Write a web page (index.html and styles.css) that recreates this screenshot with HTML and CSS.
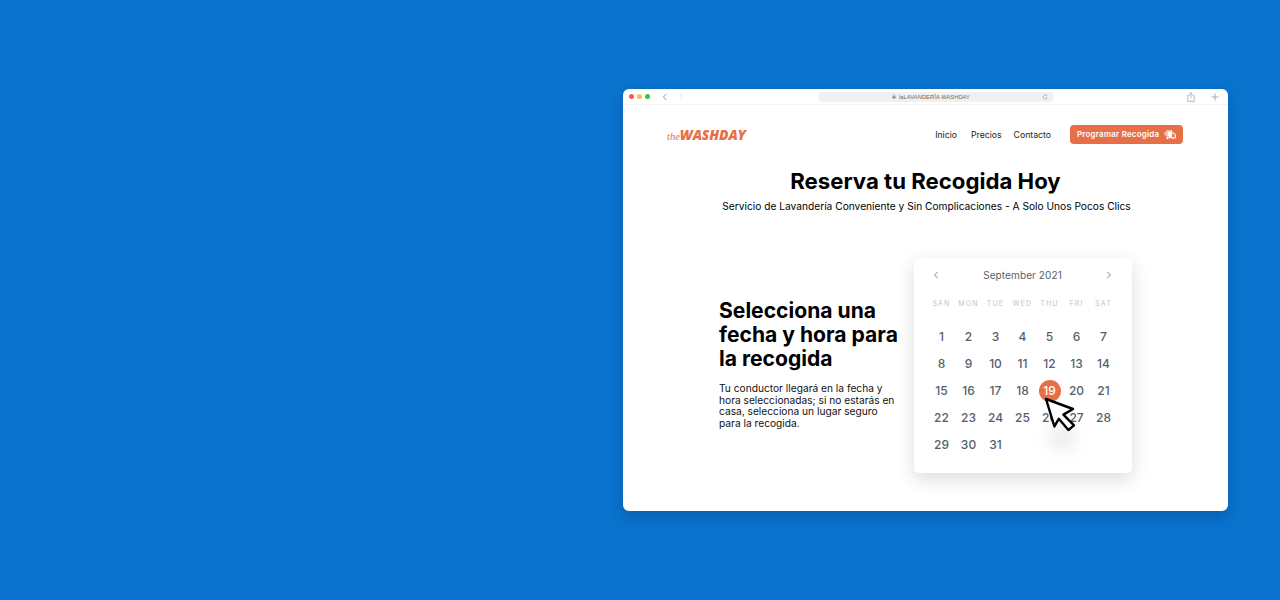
FILE: index.html
```html
<!DOCTYPE html>
<html lang="es">
<head>
<meta charset="utf-8">
<title>Washday</title>
<link rel="stylesheet" href="styles.css">
</head>
<body>
<main class="window">
  <div class="chrome">
    <div class="lights"><i class="light red"></i><i class="light yellow"></i><i class="light green"></i></div>
    <div class="navarrows">
      <svg width="6" height="8" viewBox="0 0 6 8"><path d="M4.5 .8 1.4 4l3.1 3.2" fill="none" stroke="#8a8a8a" stroke-width=".9"/></svg>
      <svg width="6" height="8" viewBox="0 0 6 8"><path d="M1.5 .8 4.6 4 1.5 7.2" fill="none" stroke="#dcdcdc" stroke-width=".9"/></svg>
    </div>
    <div class="urlbar">
      <svg class="lock" width="4" height="5" viewBox="0 0 5 6"><path d="M.5 2.6h4V5.6h-4z" fill="#8a8a8a"/><path d="M1.3 2.6V1.7a1.2 1.2 0 0 1 2.4 0v.9" fill="none" stroke="#8a8a8a" stroke-width=".6"/></svg>
      <span class="urltext">laLAVANDERÍA WASHDAY</span>
      <svg class="reload" width="6" height="6" viewBox="0 0 6 6"><path d="M5 3a2 2 0 1 1-.7-1.5" fill="none" stroke="#9a9a9a" stroke-width=".6"/><path d="M4.6.7v1.2H3.4" fill="none" stroke="#9a9a9a" stroke-width=".5"/></svg>
    </div>
    <div class="chrome-actions">
      <svg width="8" height="10" viewBox="0 0 8 10"><path d="M2.4 3.4H.8v6h6.4v-6H5.6M4 6.2V.6M2.4 2 4 .6 5.6 2" fill="none" stroke="#9c9c9c" stroke-width=".7"/></svg>
      <svg width="8" height="8" viewBox="0 0 8 8"><path d="M4 .4v7.2M.4 4h7.2" fill="none" stroke="#9c9c9c" stroke-width=".8"/></svg>
    </div>
  </div>

  <header class="sitebar">
    <div class="logo"><span class="logo-the">the</span><span class="logo-name">WASHDAY</span></div>
    <nav class="menu">
      <a class="menu-a">Inicio</a>
      <a class="menu-b">Precios</a>
      <a class="menu-c">Contacto</a>
      <a class="cta"><span class="cta-label">Programar Recogida</span>
        <svg width="12" height="10" viewBox="0 0 12 10"><path d="M2.4 1.4h5v5.4h-5z" fill="#fff"/><path d="M2 1h5.6v6.6H4.4M7.6 3h2.2l1.6 2v2.6h-1" fill="none" stroke="#fff" stroke-width="1.1"/><circle cx="3.4" cy="8" r="1.3" fill="#fff" stroke="#e76f47" stroke-width=".4"/><circle cx="9.2" cy="8" r="1.3" fill="#fff" stroke="#e76f47" stroke-width=".4"/><path d="M0 3h3.4M.6 5h2.8" stroke="#e76f47" stroke-width="2.6"/><path d="M0 3h3.4M.6 5h2.8" stroke="#fff" stroke-width="1"/></svg>
      </a>
    </nav>
  </header>

  <section class="hero">
    <h1>Reserva tu Recogida Hoy</h1>
    <p>Servicio de Lavandería Conveniente y Sin Complicaciones - A Solo Unos Pocos Clics</p>
  </section>

  <section class="booking">
    <div class="copy">
      <h2>Selecciona una fecha y hora para la recogida</h2>
      <p>Tu conductor llegará en la fecha y hora seleccionadas; si no estarás en casa, selecciona un lugar seguro para la recogida.</p>
    </div>
    <div class="calendar">
      <div class="cal-head">
        <svg width="6" height="8" viewBox="0 0 6 8"><path d="M4.8.8 1.5 4l3.3 3.2" fill="none" stroke="#a9b1bb" stroke-width="1.1"/></svg>
        <span class="month">September 2021</span>
        <svg width="6" height="8" viewBox="0 0 6 8"><path d="M1.2.8 4.5 4 1.2 7.2" fill="none" stroke="#a9b1bb" stroke-width="1.1"/></svg>
      </div>
      <div class="grid weekdays">
        <span>SAN</span><span>MON</span><span>TUE</span><span>WED</span><span>THU</span><span>FRI</span><span>SAT</span>
      </div>
      <div class="grid days">
        <span>1</span><span>2</span><span>3</span><span>4</span><span>5</span><span>6</span><span>7</span>
        <span>8</span><span>9</span><span>10</span><span>11</span><span>12</span><span>13</span><span>14</span>
        <span>15</span><span>16</span><span>17</span><span>18</span><span class="today">19</span><span>20</span><span>21</span>
        <span>22</span><span>23</span><span>24</span><span>25</span><span>26</span><span>27</span><span>28</span>
        <span>29</span><span>30</span><span>31</span>
      </div>
      <div class="cursor-shadow"></div>
      <svg class="cursor" width="33" height="36" viewBox="0 0 33 36"><path d="M2 2 29 12 19.4 17.6 30 28.4 24.4 33 14.8 21.8 10.4 29.4Z" fill="#fff" stroke="#000" stroke-width="2.4" stroke-linejoin="round"/></svg>
    </div>
  </section>
</main>
</body>
</html>
```
FILE: styles.css
```css
* { box-sizing: border-box; }
html, body { margin: 0; height: 100%; }
body {
  background: #0a73ce;
  padding: 89px 52px 0 623px;
  font-family: Inter, "Liberation Sans", sans-serif;
  overflow: hidden;
}
.window {
  width: 605px;
  height: 422px;
  background: #fff;
  border-radius: 6px;
  box-shadow: 0 6px 14px rgba(0, 40, 90, .28);
  overflow: hidden;
}
.chrome {
  height: 16px;
  display: flex;
  align-items: center;
  padding: 0 9px 0 6px;
  border-bottom: 1px solid #f3f3f3;
}
.lights { display: flex; gap: 3px; width: 33px; }
.light { width: 5px; height: 5px; border-radius: 50%; }
.red { background: #fc5753; }
.yellow { background: #fdbc40; }
.green { background: #33c748; }
.navarrows { display: flex; gap: 10px; width: 157px; }
.urlbar {
  width: 234px;
  height: 10px;
  padding-right: 10px;
  background: #f0f0f0;
  border-radius: 3px;
  display: flex;
  align-items: center;
  justify-content: center;
  gap: 3px;
  position: relative;
}
.urltext { font-size: 5.7px; line-height: 10px; color: #666; font-family: "Liberation Sans", sans-serif; letter-spacing: .1px; }
.reload { position: absolute; right: 5px; top: 2px; }
.chrome-actions { margin-left: auto; display: flex; gap: 16px; align-items: center; }

.sitebar {
  display: flex;
  align-items: center;
  justify-content: space-between;
  padding: 20px 45px 0 44px;
  height: 39px;
}
.logo { display: flex; align-items: baseline; color: #e76f47; margin-top: -1px; }
.logo-the { font: italic 400 10.5px "Liberation Serif", serif; }
.logo-name { font: italic 800 13.8px "Open Sans", sans-serif; letter-spacing: -.1px; }
.menu { display: flex; align-items: center; font-size: 8.7px; color: #222; }
.menu-a { margin-right: 14px; }
.menu-b { margin-right: 12px; }
.menu-c { margin-right: 19px; }
.cta {
  width: 113px;
  height: 19px;
  background: #e76f47;
  border-radius: 4px;
  color: #fff;
  display: flex;
  align-items: center;
  justify-content: space-between;
  padding: 0 7px;
}
.cta-label { font: 600 7.9px/19px Inter, sans-serif; letter-spacing: .25px; white-space: nowrap; }
.hero { text-align: center; padding-top: 23px; }
.hero h1 { margin: 0; font-size: 22.2px; line-height: 28px; font-weight: 700; color: #000; }
.hero p { margin: 4px 0 0; padding-left: 2px; font-size: 10.2px; line-height: 14px; color: #000; }

.booking { display: flex; margin: 45px 0 0 96px; }
.copy { width: 195px; padding-top: 40.5px; }
.copy h2 { margin: 0; font-size: 21.1px; line-height: 24px; font-weight: 700; color: #000; width: 190px; }
.copy p { margin: 12.5px 0 0; font-size: 10.2px; line-height: 11.7px; color: #111; width: 178px; }
.calendar {
  position: relative;
  width: 218px;
  height: 215px;
  background: #fff;
  border-radius: 5px;
  box-shadow: 0 6px 18px rgba(40, 50, 70, .17);
  padding: 0 14px;
}
.cal-head {
  height: 33px;
  display: flex;
  align-items: center;
  justify-content: space-between;
  padding: 0 6px 0 5px;
}
.month { font-size: 10px; color: #59616d; letter-spacing: .1px; }
.grid { display: grid; grid-template-columns: repeat(7, 27px); justify-items: center; }
.weekdays { font-size: 7px; letter-spacing: 1.2px; color: #c0c5cd; height: 12px; line-height: 12px; margin-top: 7px; }
.days { margin-top: 13px; grid-auto-rows: 27px; align-items: center; font-size: 12px; font-weight: 500; color: #555f6c; }
.today {
  width: 22px;
  height: 22px;
  line-height: 22px;
  text-align: center;
  border-radius: 50%;
  background: #e76f47;
  color: #fff;
}
.cursor { position: absolute; left: 130px; top: 139px; }
.cursor-shadow {
  position: absolute;
  left: 134px;
  top: 167px;
  width: 28px;
  height: 26px;
  background: rgba(40, 50, 70, .09);
  filter: blur(8px);
  border-radius: 50%;
}
```
